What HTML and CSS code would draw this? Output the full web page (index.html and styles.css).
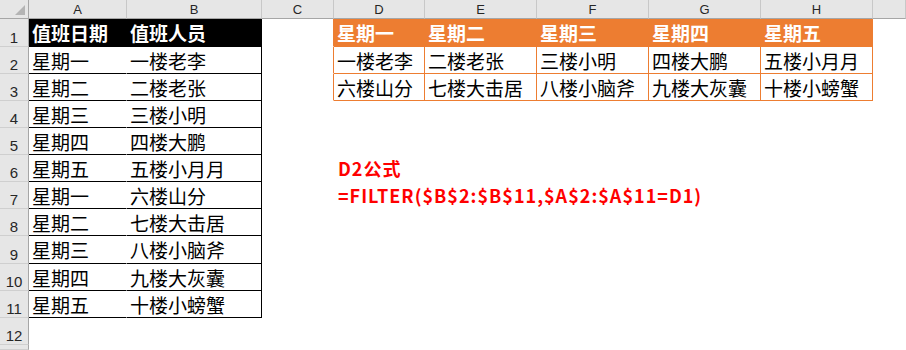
FILE: index.html
```html
<!DOCTYPE html>
<html lang="zh">
<head>
<meta charset="utf-8">
<link rel="stylesheet" href="styles.css">
</head>
<body>
<div class="sheet">
  <!-- column headers -->
  <div class="corner"><span class="tri"></span></div>
  <div class="ch">A</div><div class="ch">B</div><div class="ch">C</div><div class="ch">D</div><div class="ch">E</div><div class="ch">F</div><div class="ch">G</div><div class="ch">H</div><div class="ch"></div>

  <!-- row 1 -->
  <div class="rh">1</div>
  <div class="c lh">值班日期</div><div class="c lh">值班人员</div><div class="c oedge"></div>
  <div class="c oh">星期一</div><div class="c oh">星期二</div><div class="c oh">星期三</div><div class="c oh">星期四</div><div class="c oh">星期五</div><div class="c"></div>

  <!-- row 2 -->
  <div class="rh">2</div>
  <div class="c la">星期一</div><div class="c lt">一楼老李</div><div class="c oedge"></div>
  <div class="c ob">一楼老李</div><div class="c ob">二楼老张</div><div class="c ob">三楼小明</div><div class="c ob">四楼大鹏</div><div class="c ob">五楼小月月</div><div class="c"></div>

  <!-- row 3 -->
  <div class="rh">3</div>
  <div class="c la">星期二</div><div class="c lt">二楼老张</div><div class="c oedge"></div>
  <div class="c ob">六楼山分</div><div class="c ob">七楼大击居</div><div class="c ob">八楼小脑斧</div><div class="c ob">九楼大灰囊</div><div class="c ob">十楼小螃蟹</div><div class="c"></div>

  <!-- row 4 -->
  <div class="rh">4</div>
  <div class="c la">星期三</div><div class="c lt">三楼小明</div>
  <div class="c"></div><div class="c"></div><div class="c"></div><div class="c"></div><div class="c"></div><div class="c"></div><div class="c"></div>

  <!-- row 5 -->
  <div class="rh">5</div>
  <div class="c la">星期四</div><div class="c lt">四楼大鹏</div>
  <div class="c"></div><div class="c"></div><div class="c"></div><div class="c"></div><div class="c"></div><div class="c"></div><div class="c"></div>

  <!-- row 6 -->
  <div class="rh">6</div>
  <div class="c la">星期五</div><div class="c lt">五楼小月月</div>
  <div class="c"></div><div class="c note">D2公式</div><div class="c"></div><div class="c"></div><div class="c"></div><div class="c"></div><div class="c"></div>

  <!-- row 7 -->
  <div class="rh">7</div>
  <div class="c la">星期一</div><div class="c lt">六楼山分</div>
  <div class="c"></div><div class="c note">=FILTER($B$2:$B$11,$A$2:$A$11=D1)</div><div class="c"></div><div class="c"></div><div class="c"></div><div class="c"></div><div class="c"></div>

  <!-- row 8 -->
  <div class="rh">8</div>
  <div class="c la">星期二</div><div class="c lt">七楼大击居</div>
  <div class="c"></div><div class="c"></div><div class="c"></div><div class="c"></div><div class="c"></div><div class="c"></div><div class="c"></div>

  <!-- row 9 -->
  <div class="rh">9</div>
  <div class="c la">星期三</div><div class="c lt">八楼小脑斧</div>
  <div class="c"></div><div class="c"></div><div class="c"></div><div class="c"></div><div class="c"></div><div class="c"></div><div class="c"></div>

  <!-- row 10 -->
  <div class="rh">10</div>
  <div class="c la">星期四</div><div class="c lt">九楼大灰囊</div>
  <div class="c"></div><div class="c"></div><div class="c"></div><div class="c"></div><div class="c"></div><div class="c"></div><div class="c"></div>

  <!-- row 11 -->
  <div class="rh">11</div>
  <div class="c la">星期五</div><div class="c lt">十楼小螃蟹</div>
  <div class="c"></div><div class="c"></div><div class="c"></div><div class="c"></div><div class="c"></div><div class="c"></div><div class="c"></div>

  <!-- row 12 -->
  <div class="rh">12</div>
  <div class="c"></div><div class="c"></div><div class="c"></div><div class="c"></div><div class="c"></div><div class="c"></div><div class="c"></div><div class="c"></div><div class="c"></div>

  <!-- row 13 (partial) -->
  <div class="rh"></div>
  <div class="c"></div><div class="c"></div><div class="c"></div><div class="c"></div><div class="c"></div><div class="c"></div><div class="c"></div><div class="c"></div><div class="c"></div>
</div>
</body>
</html>
```

FILE: styles.css
```css
html, body {
  margin: 0;
  padding: 0;
  background: #ffffff;
  overflow: hidden;
}

.sheet {
  width: 906px;
  height: 350px;
  display: grid;
  grid-template-columns: 29px 98px 135px 72px 91px 112px 112px 112px 112px 1fr;
  grid-template-rows: 19px 28px 27px 27px 27px 27px 27px 27px 27px 28px 27px 27px 27px 1fr;
  font-family: "Noto Sans CJK SC", "Noto Sans", sans-serif;
  font-size: 19px;
  color: #000;
  overflow: hidden;
}

.sheet > div {
  box-sizing: border-box;
  min-width: 0;
}

.corner {
  background: #e6e6e6;
  border-right: 1px solid #a6a6a6;
  border-bottom: 1px solid #a6a6a6;
  position: relative;
}

.tri {
  position: absolute;
  right: 3px;
  bottom: 3px;
  width: 0;
  height: 0;
  border-left: 10px solid transparent;
  border-bottom: 10px solid #b4b4b4;
}

.ch {
  background: #e6e6e6;
  border-right: 1px solid #c8c8c8;
  border-bottom: 1px solid #a6a6a6;
  font-family: "Liberation Sans", Arial, sans-serif;
  font-size: 13px;
  color: #262626;
  display: flex;
  align-items: flex-end;
  justify-content: center;
  padding-bottom: 2px;
  line-height: 1;
}

.rh {
  background: #e6e6e6;
  border-right: 1px solid #a6a6a6;
  border-bottom: 1px solid #cfcfcf;
  font-family: "Liberation Sans", Arial, sans-serif;
  font-size: 15px;
  color: #262626;
  display: flex;
  align-items: flex-end;
  justify-content: center;
  padding-bottom: 1px;
  line-height: 1;
}

.c {
  border-right: 1px solid transparent;
  border-bottom: 1px solid transparent;
  display: flex;
  align-items: center;
  padding-left: 3px;
  white-space: nowrap;
  line-height: 1;
}

.lh {
  background: #000;
  color: #fff;
  font-weight: bold;
  border-right-color: #000;
  border-bottom-color: #000;
}

.la {
  border-bottom-color: #000;
}

.lt {
  border-right-color: #000;
  border-bottom-color: #000;
}

.oedge {
  border-right-color: #ed7d31;
}

.oh {
  background: #ed7d31;
  color: #fff;
  font-weight: bold;
  border-right-color: #ed7d31;
  border-bottom-color: #ed7d31;
}

.ob {
  border-right-color: #ed7d31;
  border-bottom-color: #ed7d31;
}

.note {
  color: #ff0000;
  font-weight: bold;
  font-size: 18px;
  letter-spacing: 1px;
  overflow: visible;
  padding-left: 4px;
  position: relative;
  z-index: 1;
}
```
